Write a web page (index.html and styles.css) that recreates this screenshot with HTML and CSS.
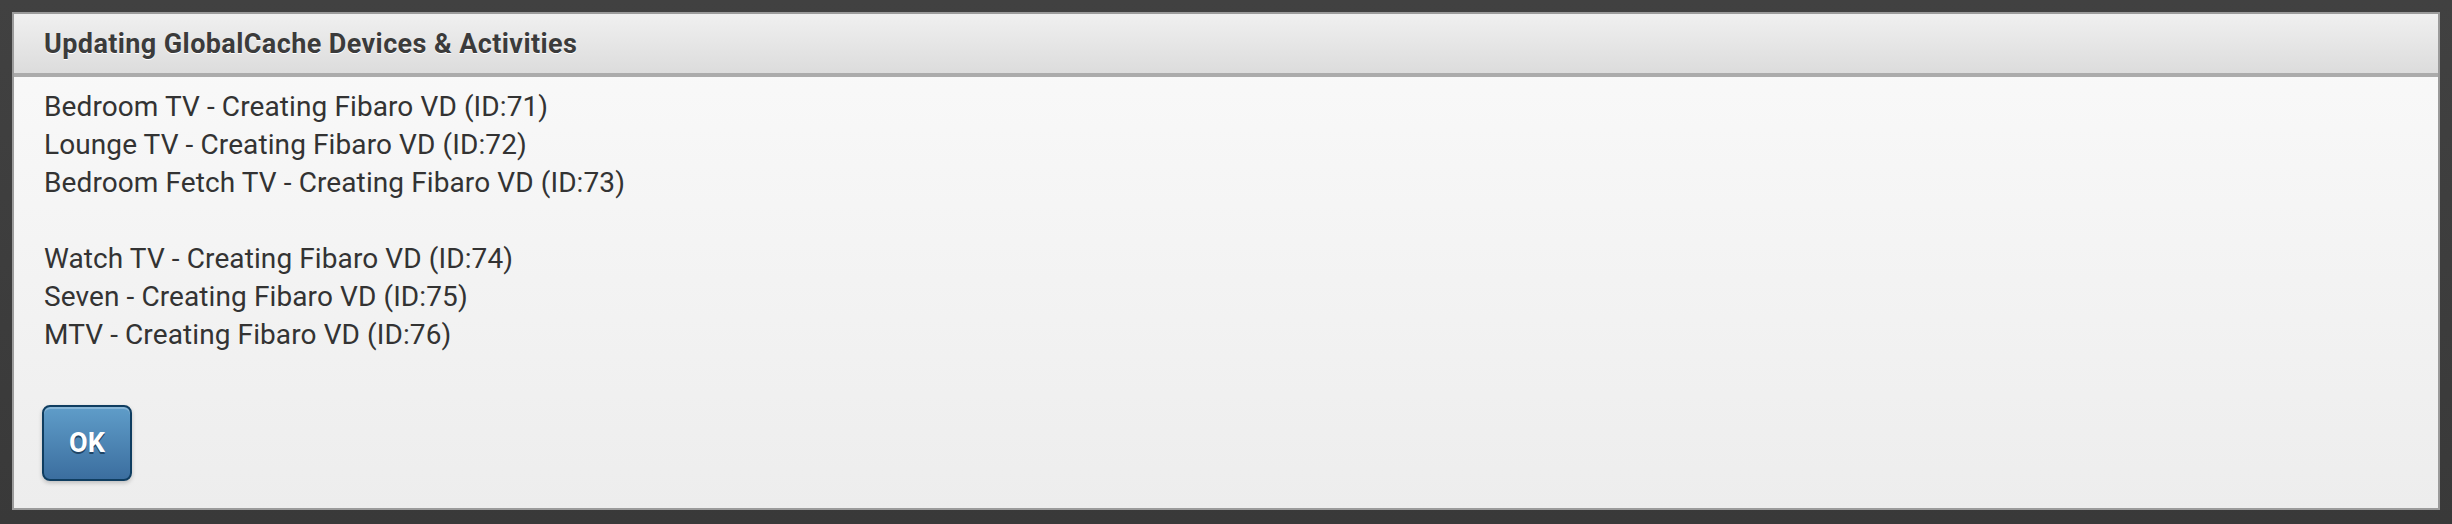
FILE: index.html
```html
<!DOCTYPE html>
<html lang="en">

<head>
    <meta charset="UTF-8">
    <title>Updating GlobalCache Devices &amp; Activities</title>
    <link rel="stylesheet" href="styles.css">
</head>

<body>

    <div class="dialog">
        <div class="dialog-header">
            <div class="dialog-title">Updating GlobalCache Devices &amp; Activities</div>
        </div>

        <div class="dialog-body">
            <div class="log">
                <div class="log-line">Bedroom TV - Creating Fibaro VD (ID:71)</div>
                <div class="log-line">Lounge TV - Creating Fibaro VD (ID:72)</div>
                <div class="log-line">Bedroom Fetch TV - Creating Fibaro VD (ID:73)</div>
                <div class="log-line">&nbsp;</div>
                <div class="log-line">Watch TV - Creating Fibaro VD (ID:74)</div>
                <div class="log-line">Seven - Creating Fibaro VD (ID:75)</div>
                <div class="log-line">MTV - Creating Fibaro VD (ID:76)</div>
            </div>

            <div class="buttons">
                <button class="btn-ok">OK</button>
            </div>
        </div>
    </div>

</body>

</html>
```

FILE: styles.css
```css
html,
body {
    height: 100%;
}

body {
    font-family: Roboto, "Liberation Sans", sans-serif;
    background: linear-gradient(#414141, #393939);
    margin: 0;
    padding: 12px;
    box-sizing: border-box;
}

.dialog {
    height: 498px;
    box-sizing: border-box;
    border: 2px solid #9b9b9b;
    background: linear-gradient(#fafafa, #ededed);
    display: flex;
    flex-direction: column;
}

.dialog-header {
    height: 59px;
    display: flex;
    align-items: center;
    padding-left: 30px;
    background: linear-gradient(#f0f0f0, #dcdcdc);
    border-bottom: 4px solid #ababab;
}

.dialog-title {
    font-size: 27px;
    font-weight: bold;
    letter-spacing: 0.4px;
    color: #3b3b3b;
    text-shadow: 0 1px 0 #fff;
}

.dialog-body {
    padding: 11px 30px 0 30px;
}

.log-line {
    font-size: 28px;
    line-height: 38px;
    letter-spacing: 0.1px;
    color: #333;
}

.buttons {
    margin-top: 51px;
}

.btn-ok {
    width: 90px;
    height: 76px;
    margin-left: -2px;
    font-family: inherit;
    font-size: 27px;
    font-weight: bold;
    color: #fff;
    text-shadow: 0 2px 0 #1f4566;
    background: linear-gradient(#5f9dc9, #3b6e9f);
    border: 2px solid #0f3d60;
    border-radius: 8px;
    box-shadow: inset 0 2px 0 rgba(255, 255, 255, 0.25), 0 2px 4px rgba(0, 0, 0, 0.2);
    cursor: pointer;
}
```
